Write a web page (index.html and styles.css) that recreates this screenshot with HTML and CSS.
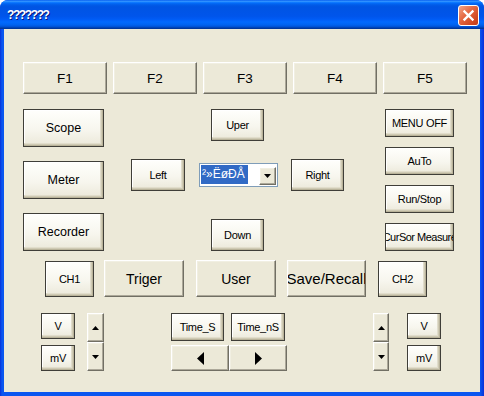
FILE: index.html
```html
<!DOCTYPE html>
<html>
	<head>
		<meta charset="utf-8" />
		<title>???????</title>
		<link rel="stylesheet" href="styles.css">
	</head>
	<body>
		<div id="window">
			<div id="titlebar">
				<span id="caption">???????</span>
				<div id="close">
					<svg width="19" height="19" viewBox="0 0 19 19"><path d="M5.5 5.5 L13.5 13.5 M13.5 5.5 L5.5 13.5" stroke="#fff" stroke-width="2.4" stroke-linecap="square" /></svg>
				</div>
			</div>
			<div id="client">
				<div id="fkeys" class="row">
					<div class="cbtn fkey">F1</div>
					<div class="cbtn fkey">F2</div>
					<div class="cbtn fkey">F3</div>
					<div class="cbtn fkey">F4</div>
					<div class="cbtn fkey">F5</div>
				</div>
				<div id="middle" class="row">
					<div id="modes" class="col">
						<div class="btn mode">Scope</div>
						<div class="btn mode">Meter</div>
						<div class="btn mode">Recorder</div>
					</div>
					<div id="pad">
						<div class="btn nav">Uper</div>
						<div id="padmid">
							<div class="btn nav wide">Left</div>
							<div id="combo">
								<span class="sel">²»ËøÐÅ</span>
								<div class="cbtn drop"><svg width="7" height="4"><polygon points="0,0 7,0 3.5,4" /></svg></div>
							</div>
							<div class="btn nav">Right</div>
						</div>
						<div class="btn nav down">Down</div>
					</div>
					<div id="menu" class="col">
						<div class="btn side">MENU OFF</div>
						<div class="btn side">AuTo</div>
						<div class="btn side">Run/Stop</div>
						<div class="btn side cursor">CurSor Measure</div>
					</div>
				</div>
				<div id="channels" class="row">
					<div class="btn ch">CH1</div>
					<div class="cbtn big triger">Triger</div>
					<div class="cbtn big user">User</div>
					<div class="cbtn big save">Save/Recall</div>
					<div class="btn ch ch2">CH2</div>
				</div>
				<div id="bottom" class="row">
					<div class="col units">
						<div class="btn unit">V</div>
						<div class="btn unit">mV</div>
					</div>
					<div class="col spin">
						<div class="cbtn"><svg width="7" height="4"><polygon points="0,4 7,4 3.5,0" /></svg></div>
						<div class="cbtn"><svg width="7" height="4"><polygon points="0,0 7,0 3.5,4" /></svg></div>
					</div>
					<div id="time" class="col">
						<div class="row timerow">
							<div class="btn tbtn">Time_S</div>
							<div class="btn tbtn tns">Time_nS</div>
						</div>
						<div class="row">
							<div class="cbtn arrow"><svg width="7" height="13"><polygon points="7,0 7,13 0,6.5" /></svg></div>
							<div class="cbtn arrow"><svg width="7" height="13"><polygon points="0,0 0,13 7,6.5" /></svg></div>
						</div>
					</div>
					<div class="col spin spin2">
						<div class="cbtn"><svg width="7" height="4"><polygon points="0,4 7,4 3.5,0" /></svg></div>
						<div class="cbtn"><svg width="7" height="4"><polygon points="0,0 7,0 3.5,4" /></svg></div>
					</div>
					<div class="col units units2">
						<div class="btn unit">V</div>
						<div class="btn unit">mV</div>
					</div>
				</div>
			</div>
		</div>
	</body>
</html>
```

FILE: styles.css
```css
body {
	margin: 0; padding: 0;
	background-color: #fff;
	font: 11px "Liberation Sans", Arial, sans-serif;
	color: #000;
}
#window {
	width: 484px; height: 396px;
	display: flex; flex-direction: column;
	border-radius: 8px 8px 0 0;
	overflow: hidden;
	background: linear-gradient(to right, #0831d9, #0a56f0 2px, #0a56f0 480px, #0831d9);
}
#titlebar {
	height: 29px; flex: none;
	display: flex; align-items: center;
	padding: 0 5px 0 7px;
	background: linear-gradient(to bottom, #0058ee 0%, #3593ff 4%, #288eff 6%, #127dff 8%, #036ffc 10%, #0262ee 14%, #0057e5 20%, #0054e3 24%, #0055eb 56%, #005bf5 66%, #026afe 76%, #0062ef 86%, #0052d6 92%, #0040ab 96%, #003092 100%);
}
#caption {
	flex: 1;
	margin-top: 1px;
	color: #fff;
	font: bold 12px "Liberation Sans", Arial, sans-serif;
	letter-spacing: -1.4px;
	text-shadow: 1px 1px #0a1883;
}
#close {
	width: 21px; height: 21px; margin-top: 2px;
	box-sizing: border-box;
	border: 1px solid #fff; border-radius: 3px;
	background: linear-gradient(135deg, #f2a488, #e56a44 40%, #d24b24 75%, #c13c17);
}
#close svg { display: block; }
#client {
	flex: 1;
	margin: 0 4px 4px;
	padding-left: 19px;
	display: flex; flex-direction: column;
	background-color: #ece9d8;
}
.row { display: flex; }
.col { display: flex; flex-direction: column; }
.btn, .cbtn {
	display: flex; align-items: center; justify-content: center;
	box-sizing: border-box;
	white-space: nowrap;
	overflow: hidden;
	flex: none;
}
.btn {
	border: 1px solid #3f3e38;
	background: linear-gradient(#fffffc, #f7f6ee 55%, #ebe8d9);
	box-shadow: inset -1px -1px 0 #b9b39a, inset -2px -2px 0 #cfcab4, inset -3px -3px 0 #e1ddcb, inset 1px 1px 0 #fff;
	letter-spacing: -0.3px;
}
.cbtn {
	border: 1px solid;
	border-color: #fff #716f64 #716f64 #fff;
	background-color: #ece9d8;
	box-shadow: inset -1px -1px 0 #aca899, inset 1px 1px 0 #f1efe2;
}
.cbtn svg, .btn svg { display: block; }
#fkeys { margin-top: 33px; gap: 6px; }
.fkey { width: 84px; height: 32px; font-size: 13.5px; }
#middle { margin-top: 15px; }
#modes { height: 142px; justify-content: space-between; }
.mode { width: 81px; height: 38px; font-size: 12.5px; letter-spacing: 0; }
#pad {
	width: 213px; margin-left: 27px;
	display: flex; flex-direction: column; align-items: center;
}
.nav { width: 53px; height: 32px; }
.nav.wide { width: 54px; }
.nav.down { margin-top: 28px; }
#padmid {
	width: 100%; margin-top: 18px;
	display: flex; align-items: center; gap: 14px;
}
#combo {
	width: 79px; height: 24px;
	box-sizing: border-box;
	display: flex; align-items: center;
	padding: 0 1px 0 1px;
	margin-right: -1px;
	border: 1px solid #7f9db9;
	background-color: #fff;
}
.sel {
	width: 47px; height: 19px;
	margin-top: -2px;
	padding-left: 1px;
	box-sizing: border-box;
	line-height: 19px;
	font-size: 12px;
	color: #fff;
	background-color: #316ac5;
	white-space: nowrap;
	overflow: hidden;
}
.drop { width: 17px; height: 18px; margin-left: auto; margin-top: 2px; }
#menu { margin-left: 41px; gap: 10px; }
.side { width: 69px; height: 28px; }
.side.cursor { letter-spacing: -0.5px; }
#channels { margin-top: 9px; margin-left: 22px; align-items: center; }
.ch { width: 49px; height: 36px; }
.ch2 { margin-left: 12px; }
.big { width: 80px; height: 37px; font-size: 14px; }
.triger { margin-left: 10px; }
.user { margin-left: 12px; }
.save { width: 79px; margin-left: 11px; font-size: 15px; }
#bottom { margin-top: 16px; margin-left: 18px; }
.units { gap: 6px; }
.unit { width: 34px; height: 26px; }
.spin { width: 17px; margin-left: 12px; }
.spin .cbtn { width: 100%; height: 29px; }
.spin2 { width: 16px; margin-left: 86px; }
.units2 { margin-left: 18px; }
#time { width: 116px; margin-left: 67px; gap: 4px; }
.timerow { gap: 7px; }
.tbtn { width: 53px; height: 28px; }
.tbtn.tns { width: 54px; }
.arrow { width: 58px; height: 26px; }
```
